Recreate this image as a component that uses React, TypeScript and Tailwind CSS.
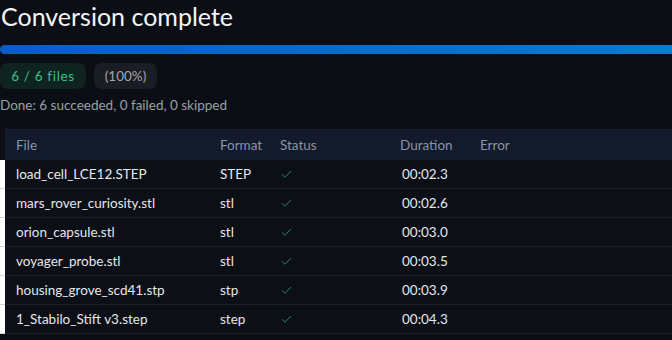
import { Check } from "lucide-react";

const rows = [
  { file: "load_cell_LCE12.STEP", format: "STEP", duration: "00:02.3" },
  { file: "mars_rover_curiosity.stl", format: "stl", duration: "00:02.6" },
  { file: "orion_capsule.stl", format: "stl", duration: "00:03.0" },
  { file: "voyager_probe.stl", format: "stl", duration: "00:03.5" },
  { file: "housing_grove_scd41.stp", format: "stp", duration: "00:03.9" },
  { file: "1_Stabilo_Stift v3.step", format: "step", duration: "00:04.3" },
];

const cols = "grid-cols-[204px_60px_120px_80px_1fr]";

export default function App() {
  return (
    <main className="h-[340px] w-[672px] overflow-hidden bg-[#0b0e14] font-['Lato',sans-serif] text-[#e5e7eb]">
      <h1 className="h-[34px] pl-[1px] pt-[1px] text-[25px] leading-[30px] text-[#f3f4f6]">
        Conversion complete
      </h1>

      <div className="mt-[11px] h-[9px] w-full rounded-l-full bg-gradient-to-r from-[#0b5cc4] to-[#0a7bcf]" />

      <div className="mt-[9px] flex gap-[8px]">
        <span className="flex h-[26px] w-[86px] items-center justify-center rounded-[8px] bg-[#0f2420] text-[13.5px] tracking-[0.05em] text-[#3cc08b]">
          6 / 6 files
        </span>
        <span className="flex h-[26px] w-[63px] items-center justify-center rounded-[8px] bg-[#1a1d23] text-[13.5px] text-[#a1a6ae]">
          (100%)
        </span>
      </div>

      <p className="mt-[6px] text-[13.5px] text-[#9aa0a8]">
        Done: 6 succeeded, 0 failed, 0 skipped
      </p>

      <div className="mt-[14px] flex">
        <div className="mt-[31px] w-[5px] shrink-0 bg-white">
          {rows.map((r) => (
            <div key={r.file} className="h-[29px] border-b border-[#d4d4d8]" />
          ))}
        </div>
        <div className="flex-1">
          <div className={`grid h-[31px] ${cols} items-center border-t border-[#1c2333] bg-[#121a2b] pl-[11px] text-[13.5px] text-[#8a93a3]`}>
            <span>File</span>
            <span>Format</span>
            <span>Status</span>
            <span>Duration</span>
            <span>Error</span>
          </div>
          {rows.map((r) => (
            <div
              key={r.file}
              className={`grid h-[29px] ${cols} items-center border-b border-[#1a1f29] bg-[#0c0f16] pl-[11px] text-[13.5px] text-[#e5e7eb]`}
            >
              <span>{r.file}</span>
              <span>{r.format}</span>
              <span>
                <Check size={13} strokeWidth={1.5} className="text-[#2fa276]" />
              </span>
              <span className="pl-[2px]">{r.duration}</span>
              <span />
            </div>
          ))}
        </div>
      </div>
    </main>
  );
}
